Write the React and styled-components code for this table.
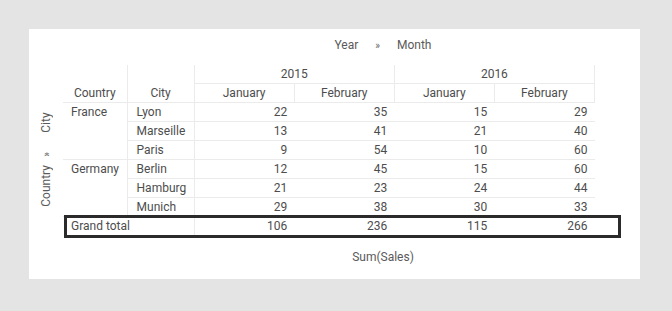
import styled, { createGlobalStyle } from "styled-components"

const GlobalStyle = createGlobalStyle`
    body {
        margin: 0;
        background: #e4e4e4;
        font-family: Roboto, "Liberation Sans", sans-serif;
        font-size: 12px;
        color: #4d4d4d;
    }
`

const Page = styled.div`
    padding: 29px;
`

const Panel = styled.div`
    width: 611px;
    height: 250px;
    background: #fff;
    display: flex;
    flex-direction: column;
`

const TopAxis = styled.div`
    height: 36px;
    box-sizing: border-box;
    padding: 9px 0 0 97px;
    display: flex;
    justify-content: center;
    align-items: flex-start;
    line-height: 15px;
    color: #5a5a5a;
`

const Sep = styled.span`
    font-size: 10px;
    color: #666;
    margin: 0 17px;
`

const Middle = styled.div`
    display: flex;
`

const LeftAxis = styled.div`
    width: 34px;
    flex: none;
    height: 114px;
    margin-top: 37px;
    padding-left: 1px;
    box-sizing: border-box;
    display: flex;
    align-items: center;
    justify-content: center;
`

const VerticalLabel = styled.div`
    writing-mode: vertical-rl;
    transform: rotate(180deg);
    display: flex;
    align-items: center;
    line-height: 15px;
    color: #5a5a5a;
`

const VSep = styled(Sep)`
    margin: 0;
    margin-inline: 8px 20px;
`

const TableWrap = styled.div`
    position: relative;
`

const Table = styled.table`
    border-collapse: collapse;
    table-layout: fixed;
    width: 532px;
`

const Row = styled.tr`
    height: ${p => p.$h || 19}px;
`

const Th = styled.th`
    font-weight: normal;
    padding: 0;
    text-align: center;
    vertical-align: bottom;
    line-height: 18px;
    border-right: 1px solid #ebebeb;
    border-bottom: 1px solid #ebebeb;
`

const Label = styled.td`
    padding: 0 0 0 ${p => p.$pad || 8}px;
    text-align: left;
    vertical-align: top;
    line-height: 18px;
    white-space: nowrap;
    border-right: 1px solid #ebebeb;
    border-bottom: ${p => p.$noBottom ? "none" : "1px solid #ebebeb"};
`

const Value = styled.td`
    padding: 0 7px 0 0;
    text-align: right;
    line-height: 18px;
    border-bottom: ${p => p.$noBottom ? "none" : "1px solid #ebebeb"};
`

const Highlight = styled.div`
    position: absolute;
    left: 1px;
    top: 150px;
    width: 557px;
    height: 23px;
    box-sizing: border-box;
    border: 3px solid #2b2b2b;
    pointer-events: none;
`

const BottomAxis = styled.div`
    margin-top: 14px;
    padding-left: 97px;
    text-align: center;
    line-height: 15px;
    color: #5a5a5a;
`

const data = [
    { country: "France", cities: [
        ["Lyon", 22, 35, 15, 29],
        ["Marseille", 13, 41, 21, 40],
        ["Paris", 9, 54, 10, 60],
    ] },
    { country: "Germany", cities: [
        ["Berlin", 12, 45, 15, 60],
        ["Hamburg", 21, 23, 24, 44],
        ["Munich", 29, 38, 30, 33],
    ] },
]

const totals = [106, 236, 115, 266]

export default function App() {
    return (
        <Page>
            <GlobalStyle />
            <Panel>
                <TopAxis>
                    <span>Year</span>
                    <Sep>»</Sep>
                    <span>Month</span>
                </TopAxis>

                <Middle>
                    <LeftAxis>
                        <VerticalLabel>
                            <span>Country</span>
                            <VSep>»</VSep>
                            <span>City</span>
                        </VerticalLabel>
                    </LeftAxis>

                    <TableWrap>
                        <Table>
                            <colgroup>
                                <col style={{ width: 64 }} />
                                <col style={{ width: 67 }} />
                                <col style={{ width: 100 }} />
                                <col style={{ width: 100 }} />
                                <col style={{ width: 100 }} />
                                <col style={{ width: 100 }} />
                            </colgroup>
                            <thead>
                                <Row $h={18}>
                                    <Th rowSpan={2}>Country</Th>
                                    <Th rowSpan={2}>City</Th>
                                    <Th colSpan={2}>2015</Th>
                                    <Th colSpan={2}>2016</Th>
                                </Row>
                                <Row>
                                    <Th>January</Th>
                                    <Th>February</Th>
                                    <Th>January</Th>
                                    <Th>February</Th>
                                </Row>
                            </thead>
                            <tbody>
                                {data.map(group => group.cities.map((c, i) => (
                                    <Row key={c[0]}>
                                        {i === 0 && <Label rowSpan={3}>{group.country}</Label>}
                                        <Label $pad={9}>{c[0]}</Label>
                                        <Value>{c[1]}</Value>
                                        <Value>{c[2]}</Value>
                                        <Value>{c[3]}</Value>
                                        <Value>{c[4]}</Value>
                                    </Row>
                                )))}
                                <Row>
                                    <Label colSpan={2} $noBottom>Grand total</Label>
                                    {totals.map((t, i) => <Value key={i} $noBottom>{t}</Value>)}
                                </Row>
                            </tbody>
                        </Table>
                        <Highlight />
                    </TableWrap>
                </Middle>

                <BottomAxis>Sum(Sales)</BottomAxis>
            </Panel>
        </Page>
    )
}
